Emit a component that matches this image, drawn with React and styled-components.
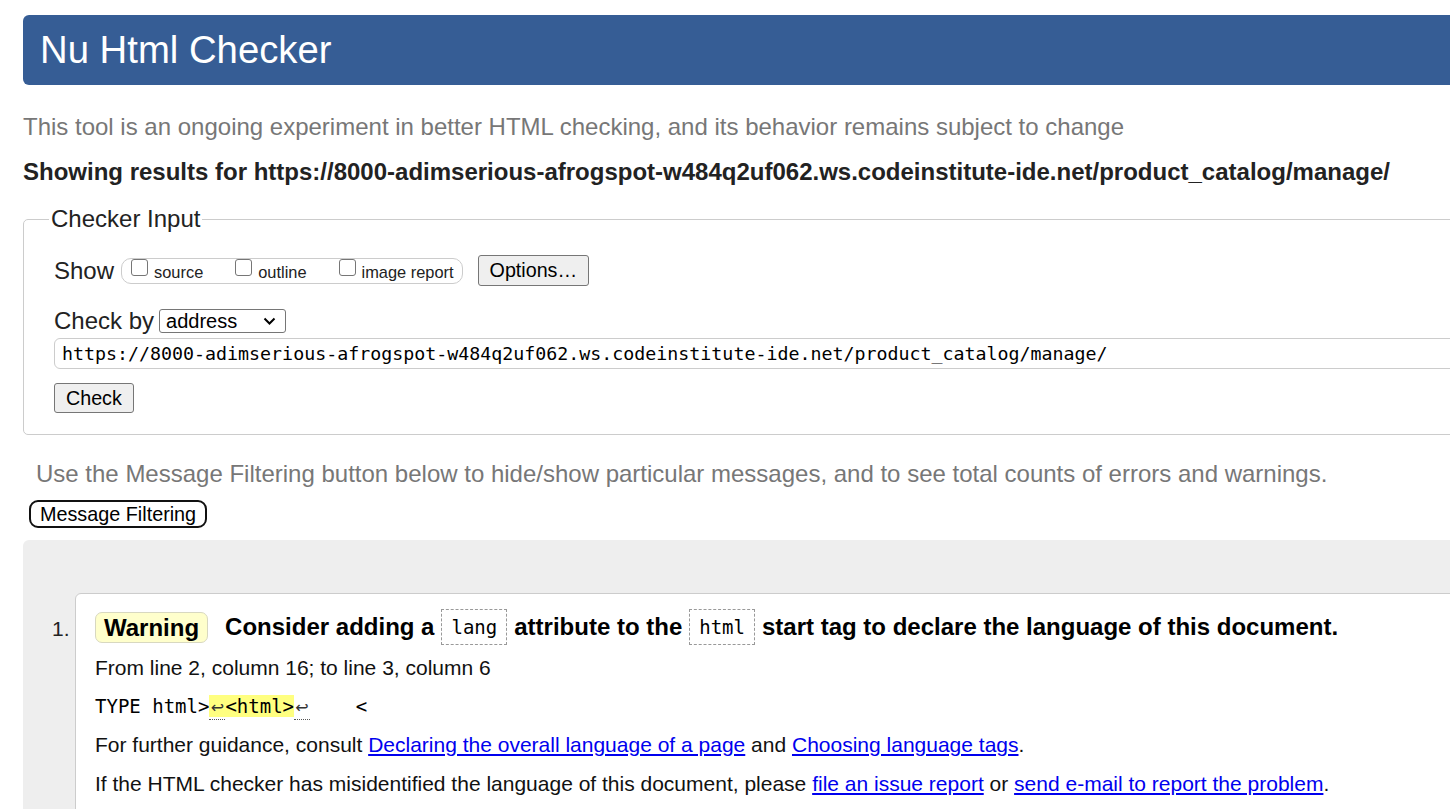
import React from "react"
import styled, { createGlobalStyle } from "styled-components"

const GlobalStyle = createGlobalStyle`
  html, body {
    margin: 0;
    padding: 0;
    overflow: hidden;
    background: #fff;
  }
  body {
    font-family: "Liberation Sans", Arial, sans-serif;
    color: #000;
  }
`

const mono = `"DejaVu Sans Mono", "Liberation Mono", monospace`

const Page = styled.div`
  width: 1520px;
  padding: 15px 0 0 23px;
`

const Title = styled.h1`
  margin: 0;
  height: 70px;
  display: flex;
  align-items: center;
  padding-left: 17px;
  background: #365d95;
  color: #fff;
  font-weight: normal;
  font-size: 38.3px;
  border-radius: 6px;
`

const Intro = styled.p`
  margin: 28px 0 0;
  color: #777;
  font-size: 24px;
  line-height: 28px;
`

const Results = styled.p`
  margin: 17px 0 0;
  color: #222;
  font-weight: bold;
  font-size: 24px;
  line-height: 28px;
`

const Fieldset = styled.fieldset`
  margin: 19px 0 0;
  padding: 22px 30px 21px;
  border: 1px solid #ccc;
  border-radius: 5px;
`

const Legend = styled.legend`
  padding: 0 2px;
  margin-left: -5px;
  font-size: 24px;
  color: #222;
  line-height: 28px;
`

const Row = styled.div`
  display: flex;
  align-items: center;
  gap: ${(p) => p.$gap || 6}px;
  margin-top: ${(p) => p.$top || 0}px;
  font-size: 24px;
  line-height: 28px;
  color: #222;
`

const Pill = styled.div`
  display: flex;
  align-items: center;
  gap: 32px;
  height: 24px;
  padding: 0 8px 0 9px;
  border: 1px solid #ccc;
  border-radius: 10px;
  margin-right: 8px;
`

const Check = styled.label`
  display: flex;
  align-items: center;
  gap: 6px;
  font-size: 16.4px;
  line-height: 18px;
  color: #222;
  padding-top: 3px;

  input {
    appearance: none;
    box-sizing: border-box;
    width: 17px;
    height: 17px;
    margin: 0;
    position: relative;
    top: -5px;
    background: #fff;
    border: 1px solid #767676;
    border-radius: 3px;
  }
`

const Button = styled.button`
  display: block;
  font-family: "Liberation Sans", Arial, sans-serif;
  font-size: 19.7px;
  color: #000;
  background: #efefef;
  border: 1px solid #767676;
  border-radius: 3px;
  height: ${(p) => p.$h || 31}px;
  padding: 0 ${(p) => p.$px || 11}px;
  margin-top: ${(p) => p.$top || 0}px;
`

const SelectWrap = styled.div`
  position: relative;
  display: inline-flex;

  svg {
    position: absolute;
    right: 10px;
    top: 8px;
    pointer-events: none;
  }
`

const Select = styled.select`
  appearance: none;
  width: 127px;
  height: 24px;
  padding: 0 0 0 6px;
  font-family: "Liberation Sans", Arial, sans-serif;
  font-size: 20px;
  color: #000;
  background: #fff;
  border: 1px solid #767676;
  border-radius: 3px;
  line-height: 22px;
`

const UrlInput = styled.input`
  display: block;
  box-sizing: border-box;
  width: 1440px;
  height: 31px;
  margin-top: 3px;
  padding: 0 7px;
  font-family: ${mono};
  font-size: 18.3px;
  color: #000;
  border: 1px solid #ccc;
  border-radius: 6px;
`

const Note = styled.p`
  margin: 25px 0 0 13px;
  color: #777;
  font-size: 24px;
  line-height: 28px;
`

const FilterButton = styled.button`
  display: block;
  margin: 12px 0 0 6px;
  height: 28px;
  padding: 0 9px;
  font-family: "Liberation Sans", Arial, sans-serif;
  font-size: 19.8px;
  color: #000;
  background: #fff;
  border: 2px solid #111;
  border-radius: 9px;
`

const Messages = styled.div`
  margin-top: 12px;
  background: #eee;
  border-radius: 6px;
  padding: 53px 0 0 52px;
  height: 300px;
`

const List = styled.ol`
  margin: 0;
  padding: 0;
  list-style: none;
`

const Item = styled.li`
  position: relative;
  background: #fff;
  border: 1px solid #ccc;
  border-radius: 6px;
  padding: 15px 19px 20px;
  font-size: 21px;
  color: #000;
`

const Num = styled.span`
  position: absolute;
  left: -24px;
  top: 20px;
  font-size: 21px;
  line-height: 29px;
  color: #222;
`

const Heading = styled.p`
  margin: 0;
  display: flex;
  align-items: center;
  font-weight: bold;
  font-size: 24px;
  line-height: 36px;
  white-space: pre;
`

const Badge = styled.strong`
  display: inline-block;
  background: #ffc;
  border: 1px solid #d8d8c0;
  border-radius: 7px;
  padding: 0 8px;
  line-height: 29px;
  margin-right: 17px;
`

const Code = styled.code`
  display: inline-block;
  font-family: ${mono};
  font-weight: normal;
  font-size: 19px;
  line-height: 34px;
  padding: 0 9px;
  margin: 0 7px;
  border: 1px dashed #999;
`

const Line = styled.p`
  margin: ${(p) => p.$top || 10}px 0 0;
  font-size: 21px;
  line-height: 29px;
  color: #111;
`

const Extract = styled.p`
  margin: 10px 0 0;
  font-family: ${mono};
  font-size: 19px;
  line-height: 29px;
  white-space: pre;
  color: #000;
`

const Mark = styled.mark`
  background: #ffff80;
  color: #000;
`

const Lf = styled.span`
  display: inline-block;
  width: 16px;
  text-align: center;
  font-family: "DejaVu Sans", sans-serif;
  font-size: 16px;
  line-height: 22px;
  border-bottom: 1px dotted #555;
  color: #333;
`

const Link = styled.a`
  color: #00e;
  text-decoration: underline;
`

const Chevron = () => (
  <svg width="13" height="9" viewBox="0 0 13 9">
    <path d="M1.5 1.5 L6.5 6.5 L11.5 1.5" fill="none" stroke="#000" strokeWidth="2" />
  </svg>
)

const url =
  "https://8000-adimserious-afrogspot-w484q2uf062.ws.codeinstitute-ide.net/product_catalog/manage/"

export default function App() {
  return (
    <>
      <GlobalStyle />
      <Page>
        <Title>Nu Html Checker</Title>
        <Intro>
          This tool is an ongoing experiment in better HTML checking, and its behavior remains
          subject to change
        </Intro>
        <Results>Showing results for {url}</Results>

        <Fieldset>
          <Legend>Checker Input</Legend>
          <Row $gap={7}>
            Show
            <Pill>
              <Check>
                <input type="checkbox" /> source
              </Check>
              <Check>
                <input type="checkbox" /> outline
              </Check>
              <Check>
                <input type="checkbox" /> image report
              </Check>
            </Pill>
            <Button $h={31} $px={11}>Options…</Button>
          </Row>
          <Row $top={21} $gap={5}>
            Check by
            <SelectWrap>
              <Select defaultValue="address">
                <option value="address">address</option>
              </Select>
              <Chevron />
            </SelectWrap>
          </Row>
          <UrlInput type="text" defaultValue={url} readOnly />
          <Button $h={30} $px={11} $top={14}>Check</Button>
        </Fieldset>

        <Note>
          Use the Message Filtering button below to hide/show particular messages, and to see
          total counts of errors and warnings.
        </Note>
        <FilterButton>Message Filtering</FilterButton>

        <Messages>
          <List>
            <Item>
              <Num>1.</Num>
              <Heading>
                <Badge>Warning</Badge>Consider adding a<Code>lang</Code>attribute to the
                <Code>html</Code>start tag to declare the language of this document.
              </Heading>
              <Line $top={8}>From line 2, column 16; to line 3, column 6</Line>
              <Extract>
                TYPE html&gt;<Mark><Lf>↩</Lf>&lt;html&gt;</Mark><Lf>↩</Lf>{"    <"}
              </Extract>
              <Line $top={9}>
                For further guidance, consult{" "}
                <Link href="#">Declaring the overall language of a page</Link> and{" "}
                <Link href="#">Choosing language tags</Link>.
              </Line>
              <Line $top={10}>
                If the HTML checker has misidentified the language of this document, please{" "}
                <Link href="#">file an issue report</Link> or{" "}
                <Link href="#">send e-mail to report the problem</Link>.
              </Line>
            </Item>
          </List>
        </Messages>
      </Page>
    </>
  )
}
